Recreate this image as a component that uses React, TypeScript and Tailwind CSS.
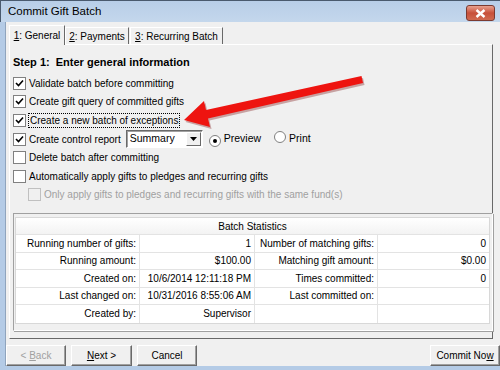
import React from 'react';

const font = "font-['Liberation_Sans',Arial,sans-serif]";

const Check: React.FC<{ checked?: boolean; disabled?: boolean }> = ({ checked, disabled }) => (
  <span
    className={`inline-flex h-[13px] w-[13px] shrink-0 items-center justify-center border ${
      disabled ? 'border-[#c0c0c0] bg-[#f0f0f0]' : 'border-[#808080] bg-white'
    }`}
  >
    {checked && (
      <svg width="9" height="9" viewBox="0 0 9 9">
        <path d="M1 4 L3.5 6.5 L8 1.5" stroke="#000" strokeWidth="1.6" fill="none" />
      </svg>
    )}
  </span>
);

const Radio: React.FC<{ on?: boolean }> = ({ on }) => (
  <span className="inline-flex h-[12px] w-[12px] shrink-0 items-center justify-center rounded-full border border-[#808080] bg-white">
    {on && <span className="h-[4px] w-[4px] rounded-full bg-black" />}
  </span>
);

const Row: React.FC<{ children: React.ReactNode; className?: string }> = ({ children, className }) => (
  <div className={`flex h-[18.6px] items-center ${className ?? ''}`}>{children}</div>
);

const stats: [string, string, string, string][] = [
  ['Running number of gifts:', '1', 'Number of matching gifts:', '0'],
  ['Running amount:', '$100.00', 'Matching gift amount:', '$0.00'],
  ['Created on:', '10/6/2014 12:11:18 PM', 'Times committed:', '0'],
  ['Last changed on:', '10/31/2016 8:55:06 AM', 'Last committed on:', ''],
  ['Created by:', 'Supervisor', '', ''],
];

const Btn: React.FC<{ children: React.ReactNode; disabled?: boolean; className?: string }> = ({
  children,
  disabled,
  className,
}) => (
  <div
    className={`flex h-[21px] items-center justify-center border border-t-white border-l-white border-r-[#696969] border-b-[#696969] bg-[#f0f0f0] shadow-[inset_-1px_-1px_0_#a0a0a0] ${
      disabled ? 'text-[#a0a0a0]' : 'text-black'
    } ${className ?? ''}`}
  >
    {children}
  </div>
);

export default function App() {
  return (
    <div className={`relative flex h-[370px] w-[500px] flex-col overflow-hidden bg-[#b4cbe6] text-[10px] text-black ${font}`}>
      {/* title bar */}
      <div className="flex h-[22px] shrink-0 items-center justify-between border-l border-t border-[#4a5a6e] bg-gradient-to-b from-[#b8cee8] to-[#c4d7ec] pl-[7px] pr-[5px]">
        <span className="text-[11.5px] text-black">Commit Gift Batch</span>
        <div className="mt-[3px] flex h-[16px] w-[29px] items-center justify-center rounded-[3px] border border-[#7b3a30] bg-gradient-to-b from-[#e8a08e] via-[#c7503a] to-[#d06a50]">
          <svg width="11" height="9" viewBox="0 0 11 9">
            <path d="M1.5 1 L9.5 8 M9.5 1 L1.5 8" stroke="#fff" strokeWidth="2.4" />
          </svg>
        </div>
      </div>

      {/* client area */}
      <div className="ml-[5px] flex h-[344px] shrink-0 flex-col border-l border-[#8fa4bd] bg-[#f0f0f0]">
        {/* tabs */}
        <div className="flex h-[22px] items-end pl-[3px] pt-[3px]">
          <div className="relative z-10 -mb-px flex h-[20px] w-[56px] items-center justify-center border border-b-0 border-l-white border-t-white border-r-[#696969] bg-[#f0f0f0]">
            <span>
              <u>1</u>: General
            </span>
          </div>
          <div className="flex h-[17px] w-[64px] items-center justify-center border border-b-0 border-l-white border-t-white border-r-[#696969]">
            <span>
              <u>2</u>: Payments
            </span>
          </div>
          <div className="ml-[1px] flex h-[17px] w-[93px] items-center justify-center border border-b-0 border-l-white border-t-white border-r-[#696969]">
            <span>
              <u>3</u>: Recurring Batch
            </span>
          </div>
        </div>

        {/* panel */}
        <div className="ml-[3px] h-[295px] w-[484px] border border-l-white border-t-white border-r-[#696969] border-b-[#696969] pl-[3px] pt-[10px]">
          <div className="flex h-[14px] items-center text-[11px] font-bold">Step 1:&nbsp; Enter general information</div>
          <div className="mt-[5px]">
            <Row>
              <Check checked />
              <span className="ml-[3px]">Validate batch before committing</span>
            </Row>
            <Row>
              <Check checked />
              <span className="ml-[3px]">Create gift query of committed gifts</span>
            </Row>
            <Row>
              <Check checked />
              <span className="ml-[2px] border border-dotted border-black px-px leading-[13px]">
                Create a new batch of exceptions
              </span>
            </Row>
            <Row>
              <Check checked />
              <span className="ml-[3px]">Create control report</span>
              <div className="ml-[5px] flex h-[18px] w-[77px] items-center border border-l-[#696969] border-t-[#696969] border-r-white border-b-white bg-white shadow-[inset_1px_1px_0_#a0a0a0]">
                <span className="flex-1 pl-[3px] text-[10.5px]">Summary</span>
                <div className="mr-px flex h-[14px] w-[15px] items-center justify-center border border-l-white border-t-white border-r-[#696969] border-b-[#696969] bg-[#f0f0f0]">
                  <svg width="7" height="4" viewBox="0 0 7 4">
                    <path d="M0 0 H7 L3.5 4 Z" fill="#000" />
                  </svg>
                </div>
              </div>
              <span className="ml-[6px]">
                <Radio on />
              </span>
              <span className="ml-[3px] text-[10.5px]">Preview</span>
              <span className="ml-[13px]">
                <Radio />
              </span>
              <span className="ml-[3px] text-[10.5px]">Print</span>
            </Row>
            <Row>
              <Check />
              <span className="ml-[3px]">Delete batch after committing</span>
            </Row>
            <Row>
              <Check />
              <span className="ml-[3px]">Automatically apply gifts to pledges and recurring gifts</span>
            </Row>
            <Row className="pl-[15px]">
              <Check disabled />
              <span className="ml-[3px] text-[#a0a0a0]">
                Only apply gifts to pledges and recurring gifts with the same fund(s)
              </span>
            </Row>
          </div>

          {/* batch statistics */}
          <div className="mt-[9px] h-[118px] w-[480px] border border-l-[#a0a0a0] border-t-[#a0a0a0] border-r-white border-b-white pl-px pt-[3px] shadow-[1px_1px_0_#a0a0a0]">
            <div className="w-[475px] border border-[#d8d8d8] bg-white">
              <div className="flex h-[17px] items-center justify-center border-b border-[#e3e3e3] bg-gradient-to-b from-white to-[#f3f3f3]">
                Batch Statistics
              </div>
              <div className="grid grid-cols-[124px_115px_123px_111px]">
                {stats.map((r, i) =>
                  r.map((c, j) => (
                    <div
                      key={`${i}-${j}`}
                      className={`flex h-[17.5px] items-center justify-end whitespace-nowrap pr-[3px] ${
                        i < stats.length - 1 ? 'border-b border-[#e3e3e3]' : ''
                      } ${j < 3 ? 'border-r border-[#e3e3e3]' : ''}`}
                    >
                      {c}
                    </div>
                  ))
                )}
              </div>
            </div>
          </div>
        </div>

        {/* buttons */}
        <div className="mt-[6px] flex items-start justify-between">
          <div className="flex gap-[5px]">
            <Btn disabled className="w-[60px]">
              <span>
                &lt; <u>B</u>ack
              </span>
            </Btn>
            <Btn className="w-[61px]">
              <span>
                <u>N</u>ext &gt;
              </span>
            </Btn>
            <Btn className="w-[60px]">Cancel</Btn>
          </div>
          <Btn className="w-[70px]">
            <span>
              Commit No<u>w</u>
            </span>
          </Btn>
        </div>
      </div>

      {/* red arrow overlay */}
      <svg
        className="pointer-events-none absolute left-0 top-0"
        width="500"
        height="370"
        viewBox="0 0 500 370"
      >
        <polygon
          points="184,120 210,127 208,118.5 363,83 361.5,76 206,110 204,101"
          fill="#7a1010"
          opacity="0.35"
          transform="translate(1.5,2)"
        />
        <polygon
          points="184,120 210,127 208,118.5 363,83 361.5,76 206,110 204,101"
          fill="#ee1410"
        />
      </svg>
    </div>
  );
}
